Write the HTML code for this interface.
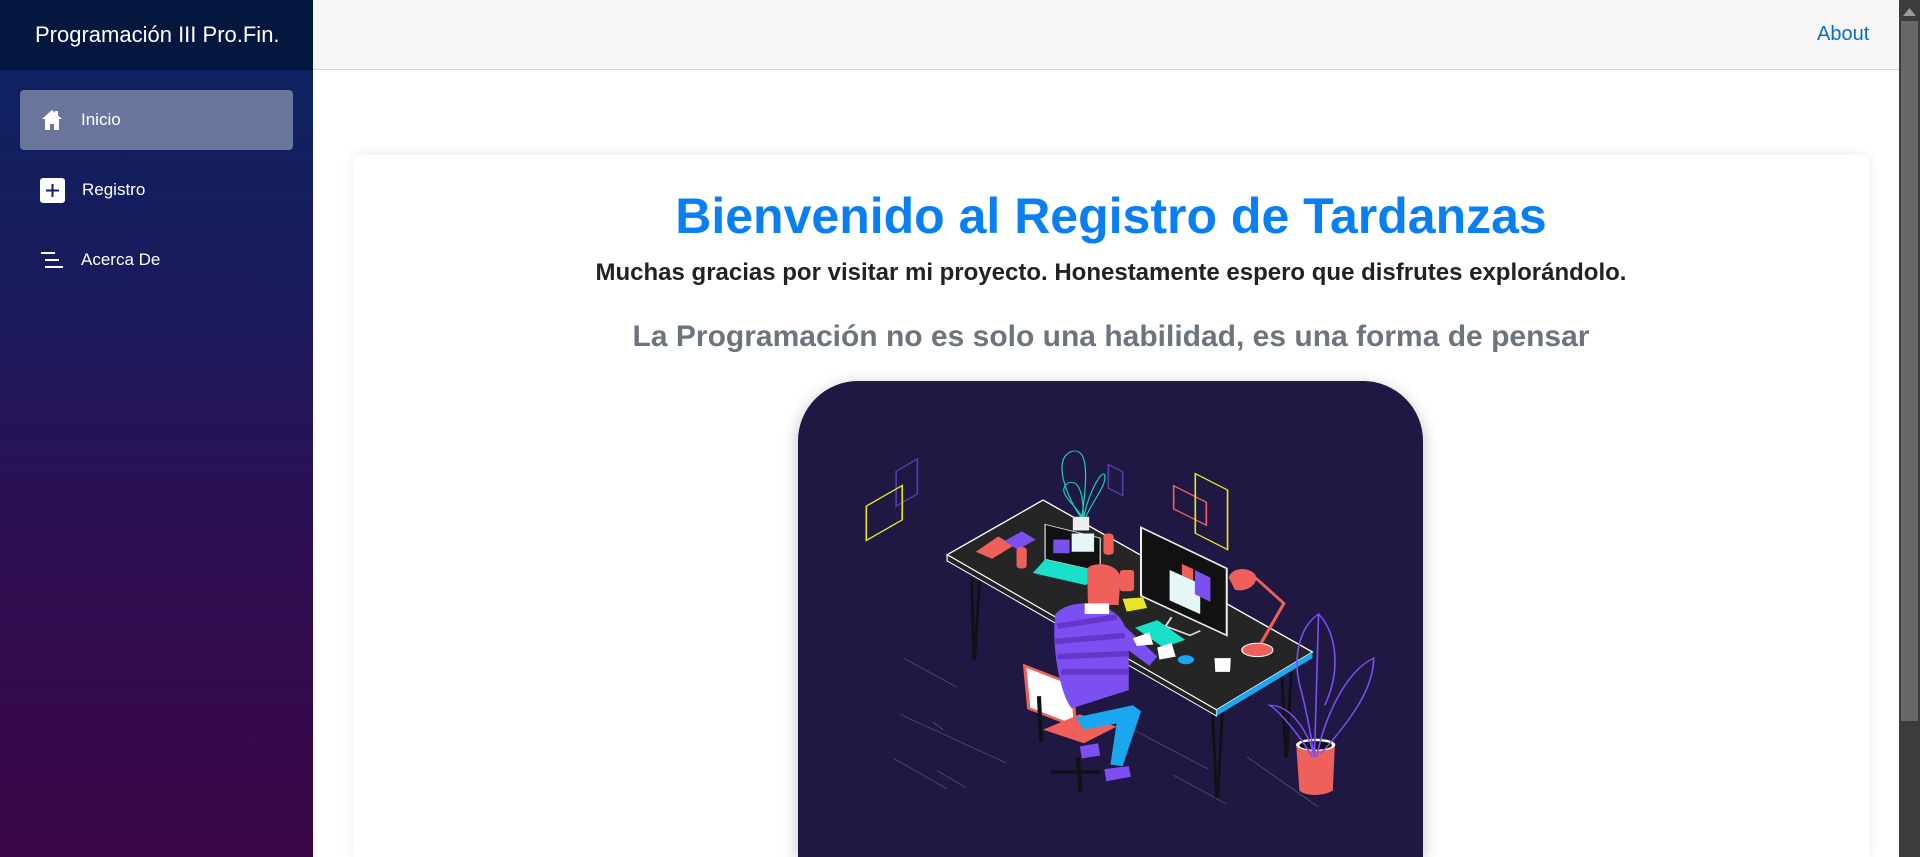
<!DOCTYPE html>
<html><head><meta charset="utf-8"><style>
*{margin:0;padding:0;box-sizing:border-box}
html,body{width:1920px;height:857px;overflow:hidden}
body{font-family:"Liberation Sans",Arial,sans-serif;background:#fff;position:relative}
#wrap{position:absolute;left:0;top:0;width:1920px;height:857px;overflow:hidden}
.side{position:absolute;left:0;top:0;width:313px;height:857px;background:linear-gradient(180deg,#0b2462 0%,#1a1a5c 35%,#2e0f52 65%,#3a0647 100%)}
.brand{height:70px;background:#04173e;color:#fff;font-size:22px;line-height:70px;padding-left:35px}
.item{position:absolute;left:20px;width:273px;height:60px;color:#fff;font-size:17px;display:flex;align-items:center;padding-left:20px}
.item span{margin-left:17px}
.act{background:#69759b;border-radius:4px}
.top{position:absolute;left:313px;top:0;width:1586px;height:70px;background:#f6f6f6;border-bottom:1px solid #d8d8d8}
.about{position:absolute;left:1817px;top:23px;font-size:20px;color:#0a6cc8}
.sb{position:absolute;left:1899px;top:0;width:21px;height:857px;background:#3c3c3c}
.thumb{position:absolute;left:2px;top:21px;width:17px;height:700px;background:#686868}
.card{position:absolute;left:353px;top:155px;width:1516px;height:702px;background:#fff;border-radius:8px 8px 0 0;box-shadow:0 0 14px rgba(0,0,0,.08)}
h1{position:absolute;left:313px;width:1596px;top:187px;text-align:center;color:#0a7ff0;font-size:50px;font-weight:bold}
.p1{position:absolute;left:313px;width:1596px;top:259px;text-align:center;color:#222;font-size:24px;font-weight:bold}
.p2{position:absolute;left:313px;width:1596px;top:320px;text-align:center;color:#6c757d;font-size:30px;font-weight:bold}
.img{position:absolute;left:798px;top:381px;width:625px;height:476px;background:#1e1842;border-radius:60px 60px 0 0;box-shadow:0 4px 16px rgba(0,0,0,.25)}
</style></head><body><div id="wrap">
<div class="side">
<div class="brand">Programación III Pro.Fin.</div>
<div class="item act" style="top:90px"><svg width="24" height="24" viewBox="0 0 24 24"><path d="M12 2L2 11h3v11h5v-6h4v6h5V11h3z" fill="#fff"/><rect x="15" y="3" width="3" height="6" fill="#fff"/></svg><span>Inicio</span></div>
<div class="item" style="top:160px"><svg width="25" height="25" viewBox="0 0 25 25"><rect x="0" y="0" width="25" height="25" rx="3" fill="#fff"/><path d="M12.5 6v13M6 12.5h13" stroke="#1a1a5c" stroke-width="2"/></svg><span>Registro</span></div>
<div class="item" style="top:230px"><svg width="24" height="20" viewBox="0 0 24 20"><path d="M1 3h14M5 10h14M5 17h18" stroke="#fff" stroke-width="2"/></svg><span>Acerca De</span></div>
</div>
<div class="top"></div>
<div class="about">About</div>
<div class="card"></div>
<h1>Bienvenido al Registro de Tardanzas</h1>
<div class="p1">Muchas gracias por visitar mi proyecto. Honestamente espero que disfrutes explorándolo.</div>
<div class="p2">La Programación no es solo una habilidad, es una forma de pensar</div>
<div class="img"></div>
<svg style="position:absolute;left:790px;top:383px" width="640" height="474" viewBox="0 0 1568 1559" preserveAspectRatio="none">
<g fill="none" stroke-width="4">
<path d="M260 290L312 250V365L260 405Z" stroke="#5b3bb0"/>
<path d="M187 405L275 337V450L187 518Z" stroke="#e6e627"/>
<path d="M780 268L815 292V370L780 346Z" stroke="#5b3bb0"/>
<path d="M940 338L1020 392V468L940 414Z" stroke="#ef5f5f"/>
<path d="M993 298L1072 352V548L993 494Z" stroke="#e6e627"/>
<g stroke="#888" stroke-width="2" opacity=".6"><path d="M278 905L408 1000M270 1090L530 1250M350 1115L375 1140M254 1235L385 1335M360 1275L430 1330M840 1140L1025 1270M940 1290L1070 1385M1120 1230L1295 1395"/></g>
<path d="M712 440C680 380 640 250 690 225C730 210 730 300 715 440M715 440C700 400 650 360 680 330C710 310 720 380 718 440M720 440C730 370 760 290 770 300C780 330 740 390 725 440" stroke="#1ecbc1" stroke-width="3"/>
</g>
<g stroke="#111" stroke-width="7"><path d="M445 620L450 910M465 640L452 910M1035 1075L1045 1365M1060 1060L1048 1365M1205 960L1215 1230M1228 945L1217 1230"/></g>
<path d="M385 565L620 385L1280 885L1045 1075Z" fill="#252525" stroke="#fff" stroke-width="4"/>
<path d="M385 565L385 585L1045 1095L1045 1075Z" fill="#222" stroke="#fff" stroke-width="3"/>
<path d="M1045 1075L1280 885L1280 905L1045 1095Z" fill="#1aa7ef"/>
<path d="M455 555L510 505L548 535L495 578Z" fill="#f0605a"/>
<path d="M525 520L568 488L602 515L558 548Z" fill="#7b4ff0"/>
<rect x="555" y="540" width="25" height="70" rx="10" fill="#f0605a"/>
<rect x="768" y="495" width="25" height="70" rx="10" fill="#f0605a"/>
<rect x="693" y="440" width="40" height="45" fill="#eee"/>
<path d="M625 465L760 510L760 620L625 580Z" fill="#111" stroke="#ddd" stroke-width="3"/>
<rect x="690" y="495" width="55" height="60" fill="#e6f6f6"/>
<rect x="645" y="515" width="40" height="45" fill="#7b4ff0"/>
<path d="M595 625L625 580L760 620L725 665Z" fill="#19e0c8"/>
<path d="M860 475L1070 610L1070 830L860 700Z" fill="#111" stroke="#eee" stroke-width="5"/>
<path d="M930 615L1005 660L1005 760L930 715Z" fill="#e6f6f6"/>
<path d="M960 595L988 612L988 650L960 633Z" fill="#f0605a"/>
<path d="M992 615L1030 640L1030 720L992 695Z" fill="#7b4ff0"/>
<path d="M935 770L920 800L980 830L1005 815" fill="none" stroke="#ddd" stroke-width="5"/>
<rect x="808" y="615" width="35" height="70" rx="8" fill="#f0605a"/>
<path d="M815 710L865 705L875 740L825 752Z" fill="#e6e627"/>
<path d="M1075 640C1080 610 1120 600 1140 630C1150 660 1120 690 1090 680Z" fill="#f0605a"/>
<path d="M1140 640L1210 725L1150 865" stroke="#f0605a" stroke-width="8" fill="none"/>
<ellipse cx="1145" cy="878" rx="38" ry="22" fill="#f0605a" stroke="#fff" stroke-width="3"/>
<ellipse cx="970" cy="910" rx="20" ry="15" fill="#1aa7ef"/>
<path d="M1040 905L1080 905L1078 950L1042 950Z" fill="#fff"/>
<path d="M845 805L900 780L968 845L915 870Z" fill="#19e0c8"/>
<path d="M575 930L690 990L700 1130L585 1070Z" fill="#fff" stroke="#f0605a" stroke-width="8"/>
<path d="M610 1030L615 1180M640 1280L760 1280M705 1230L712 1345" stroke="#111" stroke-width="10"/>
<path d="M620 1140L710 1090L800 1130L720 1185Z" fill="#f0605a"/>
<path d="M650 760C690 700 800 720 820 800L900 900L880 930L830 880L830 1010L690 1070C660 1020 640 860 650 760Z" fill="#7b4ff0"/>
<path d="M655 800L800 770M650 850L820 830M655 900L830 890M665 950L830 950" stroke="#6536c9" stroke-width="18"/>
<path d="M700 1100L840 1060L860 1080L815 1260L785 1255L800 1120L720 1140Z" fill="#1aa7ef"/>
<path d="M770 1270L830 1260L835 1295L775 1310Z" fill="#7b4ff0"/>
<path d="M710 1195L755 1185L760 1225L715 1235Z" fill="#7b4ff0"/>
<path d="M728 610C740 590 800 585 810 640L805 730L730 730Z" fill="#f0605a"/>
<rect x="722" y="725" width="60" height="35" fill="#fff"/>
<path d="M840 840L880 820L890 860L850 865Z" fill="#fff"/>
<path d="M900 870L935 855L945 900L905 910Z" fill="#fff"/>
<path d="M1240 1185L1335 1185L1330 1340C1310 1360 1260 1360 1248 1340Z" fill="#f0605a"/>
<ellipse cx="1288" cy="1190" rx="48" ry="20" fill="#fff"/><ellipse cx="1288" cy="1192" rx="40" ry="14" fill="#111"/>
<g fill="none" stroke="#7b4ff0" stroke-width="4"><path d="M1285 1230L1295 760C1250 800 1230 900 1250 1000C1270 1100 1285 1230 1285 1230M1295 760C1340 820 1350 950 1310 1060"/><path d="M1290 1230C1310 1100 1360 950 1430 905C1430 1000 1380 1100 1300 1220"/><path d="M1280 1230C1240 1140 1190 1070 1175 1060C1230 1060 1270 1150 1285 1230"/></g>
</svg>
<div class="sb"><div class="thumb"></div><svg style="position:absolute;left:4px;top:8px" width="13" height="8"><path d="M0 8L6.5 0L13 8Z" fill="#999"/></svg></div>
</div></body></html>
